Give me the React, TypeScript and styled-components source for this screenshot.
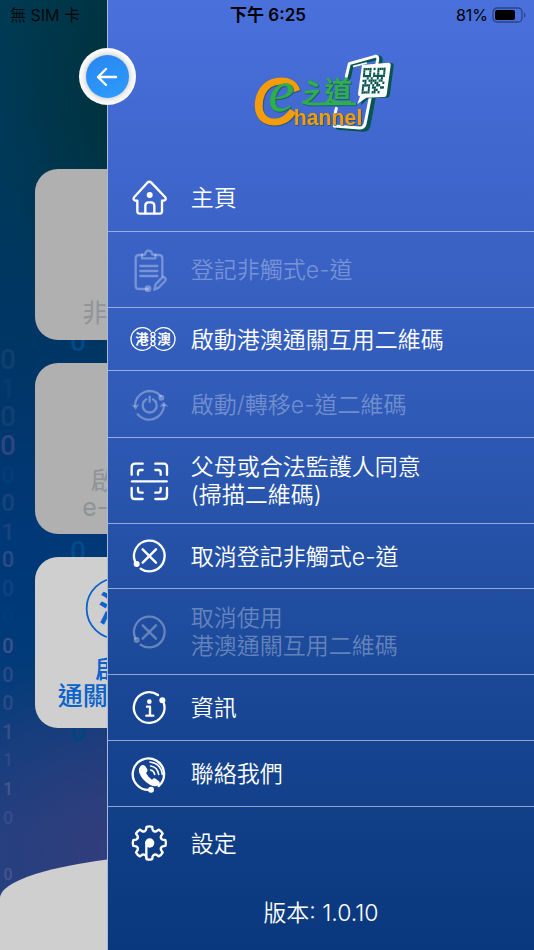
import React from 'react';
import styled, { createGlobalStyle } from 'styled-components';

const GlobalStyle = createGlobalStyle`
  *, *::before, *::after { box-sizing: border-box; }
  body {
    margin: 0;
    font-family: Inter, "Noto Sans CJK TC", sans-serif;
  }
`;

const Screen = styled.div`
  position: relative;
  min-height: 100vh;
  overflow: hidden;
  display: flex;
`;

/* ---------- status bar ---------- */

const StatusBar = styled.header`
  position: absolute;
  inset: 0 0 auto 0;
  z-index: 3;
  display: grid;
  grid-template-columns: 1fr auto 1fr;
  align-items: center;
  height: 30px;
  padding: 0 8px 0 10px;
  font-size: 16px;
  line-height: 20px;
  color: #000;
`;

const Carrier = styled.span`
  color: #02090d;
`;

const Clock = styled.time`
  font-size: 17px;
  font-weight: 600;
`;

const Power = styled.span`
  display: flex;
  align-items: center;
  justify-content: flex-end;
  gap: 4px;
`;

/* ---------- home page behind the drawer ---------- */

const Home = styled.main`
  position: relative;
  flex: 1;
  display: flex;
  flex-direction: column;
  padding-top: 169px;
  background:
    radial-gradient(circle at 24% 90%, rgba(56, 60, 122, 0.85), rgba(40, 60, 125, 0) 22%),
    radial-gradient(ellipse 140px 300px at 24% 8%, #003340 20%, rgba(0, 51, 64, 0)),
    linear-gradient(180deg, #003b55 0%, #00385c 20%, #003666 38%, #003878 56%, #003a78 68%, #0b3d7c 76%, #1d4182 88%, #1d4182 100%);
`;

const Digits = styled.div<{ $left: number; $top: number; $height: number }>`
  position: absolute;
  left: ${(p) => p.$left}px;
  top: ${(p) => p.$top}px;
  height: ${(p) => p.$height}px;
  display: grid;
  grid-auto-rows: minmax(0, 1fr);
  width: 16px;
  place-items: center;
  font-family: Roboto, sans-serif;
  font-weight: 500;
`;

const Digit = styled.span<{ $size: number; $tone: string }>`
  font-size: ${(p) => p.$size}px;
  line-height: 28px;
  color: ${(p) => p.$tone};
`;

const Cards = styled.div`
  position: relative;
  display: grid;
  grid-template-columns: 1fr 1fr;
  grid-auto-rows: 171px;
  gap: 23px;
  padding: 0 35px;
`;

const Card = styled.button<{ $active?: boolean }>`
  grid-column: 1;
  display: flex;
  flex-direction: column;
  align-items: center;
  justify-content: flex-end;
  padding: 0 0 ${(p) => (p.$active ? 19 : 14)}px;
  border: 0;
  border-radius: 23px;
  background: ${(p) => (p.$active ? '#cfcfcf' : '#b0b0b0')};
  color: ${(p) => (p.$active ? '#0a62cc' : '#8d9499')};
  font-family: inherit;
  font-size: 25px;
  font-weight: ${(p) => (p.$active ? 500 : 400)};
  line-height: 26px;
  white-space: pre-line;
`;

const CardIcon = styled.svg`
  flex: none;
  width: 122px;
  height: 69px;
  margin-bottom: 14px;
`;

const Dome = styled.div`
  height: 100px;
  margin-top: auto;
  border-radius: 50% 50% 0 0 / 48px 48px 0 0;
  background: #cfcfcf;
`;

/* ---------- drawer ---------- */

const Drawer = styled.aside`
  position: absolute;
  inset: 0 0 0 20%;
  z-index: 2;
  display: flex;
  flex-direction: column;
  border-left: 1px solid #a9b9d6;
  background: linear-gradient(180deg, #4a70dc 0%, #3e65ca 20%, #305bb8 42%, #2451a6 58%, #184694 75%, #103e86 88%, #0a387e 100%);
  color: #fff;
`;

const BackButton = styled.button`
  position: absolute;
  left: -29px;
  top: 48px;
  display: grid;
  place-items: center;
  width: 57px;
  height: 57px;
  padding: 0;
  border: 0;
  border-radius: 50%;
  background: radial-gradient(circle closest-side, #d4d4d4 72%, #f2f2f2 86%, #ffffff 100%);
`;

const BackDisc = styled.span`
  display: grid;
  place-items: center;
  width: 43px;
  height: 43px;
  border-radius: 50%;
  background: linear-gradient(160deg, #2a86ee, #2c9cff);
`;

const Brand = styled.div`
  display: flex;
  justify-content: center;
  padding: 45px 0 24px 5px;
`;

const Menu = styled.nav`
  display: flex;
  flex-direction: column;
`;

const Item = styled.button<{ $height: number }>`
  display: grid;
  grid-template-columns: 46px 1fr;
  gap: 15px;
  align-items: center;
  min-height: ${(p) => p.$height}px;
  padding: 0 12px 0 22px;
  border: 0;
  border-bottom: 1px solid rgba(190, 204, 236, 0.72);
  background: none;
  color: #fff;
  font-family: inherit;
  font-size: 23px;
  font-weight: 350;
  line-height: 28px;
  text-align: left;
  white-space: pre-line;

  &:last-child { border-bottom: 0; }
  &:disabled { color: rgba(255, 255, 255, 0.32); }
`;

const ItemLabel = styled.span`
  padding-top: 1px;
`;

const Version = styled.p`
  margin: auto 0 0;
  padding-bottom: 22px;
  font-size: 23px;
  font-weight: 350;
  line-height: 30px;
  text-align: center;
`;

/* ---------- icons ---------- */

const Glyph = styled.svg`
  display: block;
  overflow: visible;
  fill: none;
  stroke: currentColor;
  stroke-width: 7;
  stroke-linecap: round;
  stroke-linejoin: round;

  .solid { fill: currentColor; stroke: none; }
  .label {
    fill: currentColor;
    stroke: none;
    font-family: "Noto Sans CJK TC", sans-serif;
    font-weight: 700;
    text-anchor: middle;
  }
`;

const HomeIcon = () => (
  <Glyph width="38" height="38" viewBox="0 0 114 114" aria-hidden="true">
    <path d="M22 65H16Q7 62 13 54L52 11Q58 5 64 11L105 54Q111 62 102 65H96V97Q96 104 89 104H29Q22 104 22 97Z" />
    <path d="M46 103V80Q46 70 56 70H63Q73 70 73 80V103" />
    <circle className="solid" cx="59" cy="48" r="9" />
  </Glyph>
);

const FormIcon = () => (
  <Glyph width="38" height="44" viewBox="0 0 114 132" aria-hidden="true">
    <path d="M53 123H27Q17 123 17 113V31Q17 21 27 21H36M76 21H87Q97 21 97 31V84" />
    <path d="M36 31V20H45Q47 8 56 8Q65 8 67 20H76V31Z" />
    <path d="M31 54H82M31 69H82M31 84H82" />
    <circle className="solid" cx="54" cy="122" r="10" />
    <path d="M73 125L77 109L96 89Q101 85 105 90Q109 94 105 99L86 119Z" />
  </Glyph>
);

const PairShapes = () => (
  <>
    <path d="M62 16A34 34 0 1 0 62 62M76 16A34 34 0 1 1 76 62" />
    <circle cx="69" cy="25" r="6" />
    <circle cx="69" cy="39" r="6" />
    <circle cx="69" cy="53" r="6" />
    <text className="label" x="36" y="54" fontSize="40">港</text>
    <text className="label" x="102" y="54" fontSize="40">澳</text>
  </>
);

const PairIcon = () => (
  <Glyph width="46" height="26" viewBox="0 0 138 78" aria-hidden="true">
    <g strokeWidth="4"><PairShapes /></g>
  </Glyph>
);

const PowerIcon = () => (
  <Glyph width="38" height="38" viewBox="0 0 114 114" aria-hidden="true">
    <path d="M15 62A44 44 0 0 1 92 33" />
    <path d="M23 88A45 45 0 0 0 102 62" />
    <circle className="solid" cx="94" cy="38" r="9" />
    <path className="solid" d="M4 58L15 62L28 58L17 74Z" />
    <path className="solid" d="M88 66L101 50L115 66L102 62Z" />
    <path d="M49 43A21 21 0 1 0 69 43" />
    <path d="M59 35V50" />
  </Glyph>
);

const ScanIcon = () => (
  <Glyph width="38" height="38" viewBox="0 0 114 114" aria-hidden="true">
    <path d="M5 38V15Q5 5 15 5H38M76 5H101Q111 5 111 15V38M111 78V101Q111 111 101 111H76M38 111H15Q5 111 5 101V78" />
    <path d="M24 38V31Q24 24 31 24H38M76 24H85Q92 24 92 31V38M92 78V85Q92 92 85 92H76M38 92H31Q24 92 24 85V78" />
    <path d="M6 58H110" />
  </Glyph>
);

const CancelIcon = () => (
  <Glyph width="38" height="38" viewBox="0 0 114 114" aria-hidden="true">
    <path d="M32 95A46 46 0 1 0 16 76" />
    <circle className="solid" cx="20" cy="81" r="9" />
    <path d="M38 37L78 77M78 37L38 77" />
  </Glyph>
);

const InfoIcon = () => (
  <Glyph width="38" height="38" viewBox="0 0 114 114" aria-hidden="true">
    <path d="M84 18A46 46 0 1 0 100 38" />
    <circle className="solid" cx="97" cy="34" r="9" />
    <circle className="solid" cx="58" cy="38" r="7" />
    <path d="M51 53H60V79M49 80H70" />
  </Glyph>
);

const ContactIcon = () => (
  <Glyph width="38" height="38" viewBox="0 0 114 114" aria-hidden="true">
    <path d="M62 104A47 47 0 1 1 86 93" />
    <circle className="solid" cx="63" cy="104" r="9" />
    <path
      className="solid"
      d="M31 34Q39 26 46 34L52 43Q55 49 48 54Q54 66 66 74Q72 67 78 72L87 79Q92 84 86 90Q77 98 61 90Q35 76 27 51Q25 41 31 34Z"
    />
    <g strokeWidth="5">
      <path d="M62 45Q72 47 74 58M62 33Q82 36 86 58M60 21Q93 25 97 58" />
    </g>
  </Glyph>
);

const gearOutline = Array.from({ length: 8 }, (_, tooth) => {
  const at = (deg: number, r: number) => {
    const a = ((tooth * 45 + deg - 90) * Math.PI) / 180;
    return `${(58 + r * Math.cos(a)).toFixed(1)} ${(57 + r * Math.sin(a)).toFixed(1)}`;
  };
  return `${tooth ? 'L' : 'M'}${at(-10, 49)}Q${at(0, 51)} ${at(10, 49)}L${at(14, 41)}Q${at(22, 35)} ${at(31, 41)}`;
}).join('') + 'Z';

const SettingsIcon = () => (
  <Glyph width="38" height="38" viewBox="0 0 114 114" aria-hidden="true">
    <path d={gearOutline} />
    <circle className="solid" cx="59" cy="57" r="14" />
    <path d="M49 64V101" />
  </Glyph>
);

const BatteryIcon = () => (
  <svg width="34" height="16" viewBox="0 0 34 16" aria-hidden="true">
    <rect x="1" y="1" width="29" height="14" rx="4" fill="none" stroke="#2c4383" strokeWidth="1.3" />
    <rect x="3" y="3" width="20" height="10" rx="2" fill="#000" />
    <path d="M32 5.5V10.5Q33.5 9.5 33.5 8Q33.5 6.5 32 5.5Z" fill="#2c4383" />
  </svg>
);

const qrRows = [
  '11110101111',
  '10010001001',
  '10010101001',
  '11110111111',
  '00101001010',
  '11011110110',
  '01001011001',
  '11110101100',
  '10010110011',
  '10010011000',
  '11110110100',
];

const LogoArt = styled.svg`
  display: block;

  .shaded { filter: drop-shadow(2px 2px 0 #14505e); }
  .round { font-family: "Liberation Sans", sans-serif; }
  .letter { font-family: "Liberation Serif", serif; font-style: italic; }
  .brush { font-family: "Noto Sans CJK TC", sans-serif; font-weight: 700; }
`;

const Logo = () => (
  <LogoArt width="165" height="95" viewBox="0 0 495 285" role="img" aria-label="e-道 Channel">
    <g fill="none" strokeLinejoin="round" strokeLinecap="round">
      <path d="M324 98L332 60L412 38Q420 36 419 46L383 238Q380 256 366 254L290 248" stroke="#07554f" strokeWidth="12" />
      <path d="M316 94L325 56L402 34Q412 32 410 44L373 232Q370 250 356 249L280 243M286 190L283 202" stroke="#fff" strokeWidth="9" />
      <path d="M338 64L376 54" stroke="#fff" strokeWidth="5" />
    </g>
    <path d="M369 62L451 54Q459 54 458 62L446 152Q445 158 438 158L383 160L360 181L363 156Q358 154 359 149Z" fill="#07554f" />
    <path d="M363 60L442 53Q450 53 449 61L437 149Q436 156 429 156L376 158L349 177L357 154Q350 153 351 146Z" fill="#fff" />
    <g transform="translate(368 69) skewX(-6) rotate(-1)" fill="#07554f">
      {qrRows.flatMap((row, y) =>
        [...row].map((bit, x) =>
          bit === '1' ? <rect key={`${x}-${y}`} x={x * 6} y={y * 7} width="6" height="7" /> : null,
        ),
      )}
    </g>
    <g className="shaded">
      <text className="round" x="34" y="238" fontSize="192" fontStyle="italic" fill="#f59c0c" stroke="#f59c0c" strokeWidth="6">C</text>
    </g>
    <g className="shaded">
      <text className="letter" x="82" y="198" fontSize="176" fill="#2fae4d" stroke="#2fae4d" strokeWidth="1">e</text>
    </g>
    <g className="shaded">
      <text className="brush" x="250" y="170" fontSize="84" fill="#2fae4d">道</text>
      <path d="M191 142L230 138L210 160Q198 170 187 172Q210 180 250 176L345 176" fill="none" stroke="#2fae4d" strokeWidth="9" strokeLinejoin="round" />
      <path d="M207 112L226 120" stroke="#2fae4d" strokeWidth="12" strokeLinecap="round" />
    </g>
    <g className="shaded">
      <text className="round" x="158" y="239" fontSize="64" fontWeight="700" fill="#f59c0c">hannel</text>
    </g>
  </LogoArt>
);

/* ---------- data ---------- */

type MenuEntry = { label: string; icon: React.ReactNode; height: number; disabled?: boolean };

const entries: MenuEntry[] = [
  { label: '主頁', icon: <HomeIcon />, height: 68 },
  { label: '登記非觸式e-道', icon: <FormIcon />, height: 76, disabled: true },
  { label: '啟動港澳通關互用二維碼', icon: <PairIcon />, height: 63 },
  { label: '啟動/轉移e-道二維碼', icon: <PowerIcon />, height: 67, disabled: true },
  { label: '父母或合法監護人同意\n(掃描二維碼)', icon: <ScanIcon />, height: 86 },
  { label: '取消登記非觸式e-道', icon: <CancelIcon />, height: 65 },
  { label: '取消使用\n港澳通關互用二維碼', icon: <CancelIcon />, height: 86, disabled: true },
  { label: '資訊', icon: <InfoIcon />, height: 66 },
  { label: '聯絡我們', icon: <ContactIcon />, height: 66 },
  { label: '設定', icon: <SettingsIcon />, height: 72 },
];

const mainDigits: [string, number, string][] = [
  ['0', 28, '#103f70'], ['1', 28, '#033c70'], ['0', 28, '#124074'], ['0', 28, '#2c4680'],
  ['0', 24, '#003e78'], ['0', 24, '#18447e'], ['1', 24, '#18447e'], ['0', 22, '#2c4b88'],
  ['0', 22, '#0f4280'], ['0', 20, '#033c7a'], ['0', 20, '#3b528e'], ['0', 20, '#2a4b88'],
  ['0', 20, '#2a4b88'], ['1', 20, '#384f8a'], ['1', 18, '#2e4b88'], ['1', 18, '#45558f'],
  ['0', 18, '#344e8a'], ['', 16, '#344c88'], ['0', 16, '#46558e'],
];

const sideDigits: Record<number, [string, string]> = {
  0: ['0', '#004a88'],
  7: ['0', '#004c8a'],
  13: ['0', '#03457f'],
};

export default function App() {
  return (
    <Screen>
      <GlobalStyle />
      <StatusBar>
        <Carrier>無 SIM 卡</Carrier>
        <Clock>下午 6:25</Clock>
        <Power>81%<BatteryIcon /></Power>
      </StatusBar>

      <Home>
        <Digits $left={0} $top={346} $height={543} aria-hidden="true">
          {mainDigits.map(([char, size, tone], i) => (
            <Digit key={i} $size={size} $tone={tone}>{char}</Digit>
          ))}
        </Digits>
        <Digits $left={70} $top={327} $height={420} aria-hidden="true">
          {Array.from({ length: 14 }, (_, i) => (
            <Digit key={i} $size={28} $tone={sideDigits[i]?.[1] ?? 'transparent'}>{sideDigits[i]?.[0]}</Digit>
          ))}
        </Digits>
        <Cards>
          <Card disabled>非觸式e-道</Card>
          <Card disabled>{'啟動/轉移\ne-道二維碼'}</Card>
          <Card $active>
            <CardIcon as={Glyph} viewBox="0 0 138 78" aria-hidden="true">
              <g strokeWidth="2"><PairShapes /></g>
            </CardIcon>
            {'啟動港澳\n通關互用二維碼'}
          </Card>
        </Cards>
        <Dome />
      </Home>

      <Drawer>
        <Brand><Logo /></Brand>
        <Menu>
          {entries.map((entry) => (
            <Item key={entry.label} $height={entry.height} disabled={entry.disabled}>
              {entry.icon}
              <ItemLabel>{entry.label}</ItemLabel>
            </Item>
          ))}
        </Menu>
        <Version>版本: 1.0.10</Version>
        <BackButton aria-label="返回">
          <BackDisc>
            <svg width="22" height="20" viewBox="0 0 22 20" fill="none" stroke="#fff" strokeWidth="2.4" strokeLinecap="round" strokeLinejoin="round" aria-hidden="true">
              <path d="M20 10H2M10 2L2 10L10 18" />
            </svg>
          </BackDisc>
        </BackButton>
      </Drawer>
    </Screen>
  );
}
